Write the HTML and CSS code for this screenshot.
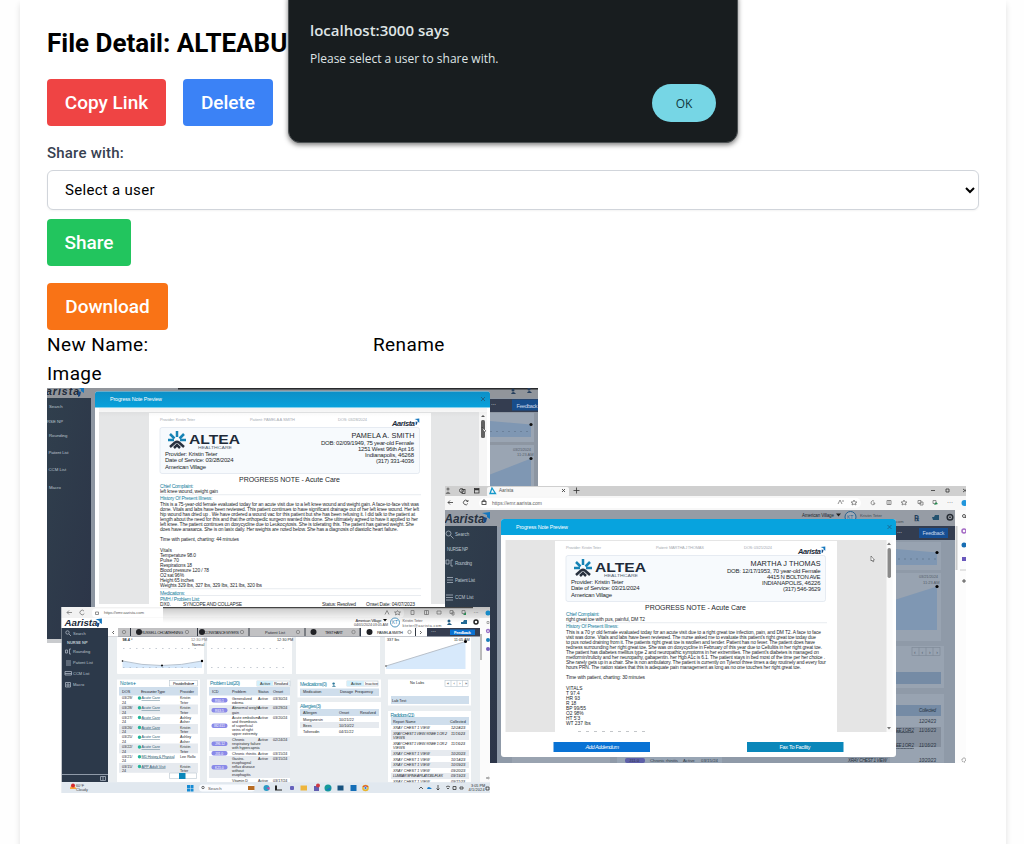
FILE: index.html
```
<!DOCTYPE html>
<html lang="en">
<head>
<meta charset="utf-8">
<title>File Detail</title>
<link rel="stylesheet" href="styles.css">
</head>
<body>
<main class="card">
  <h1 class="title">File Detail: ALTEABU</h1>
  <div class="actions">
    <button class="btn red">Copy Link</button>
    <button class="btn blue">Delete</button>
  </div>
  <label class="label" for="user">Share with:</label>
  <select class="select" id="user"><option>Select a user</option></select>
  <button class="btn green">Share</button>
  <button class="btn orange">Download</button>
  <div class="rename"><span class="name">New Name:</span><span>Rename</span></div>
  <div class="caption">Image</div>
  <svg class="preview" viewBox="47 388 932 412" width="932" height="412">
    <defs>
      <linearGradient id="side" x1="0" y1="0" x2="1" y2="1"><stop offset="0" stop-color="#303f4d"/><stop offset="1" stop-color="#2c3548"/></linearGradient>
      <linearGradient id="head" x1="0" y1="0" x2="0" y2="1"><stop offset="0" stop-color="#0d8fc6"/><stop offset="1" stop-color="#07a1dc"/></linearGradient>
      <linearGradient id="shade" x1="0" y1="0" x2="0" y2="1"><stop offset="0" stop-color="#000" stop-opacity=".22"/><stop offset="1" stop-color="#000" stop-opacity="0"/></linearGradient>
      <g id="altea">
        <g stroke-width="2.5" fill="none"><path stroke="#1683b5" d="M9 0v6M2 3l4.500 4.500M16 3l-4.500 4.500M0 9h6M12 9h6"/><path stroke="#28313f" d="M2 16l5-4.500q2-1.500 4 0l5 4.500M6 17l3-3 3 3"/></g>
        <text class="s b dark" x="21" y="12.500" font-size="13" textLength="51" lengthAdjust="spacingAndGlyphs">ALTEA</text>
        <text class="s" x="30" y="17.500" font-size="3.600" fill="#526273" textLength="34" lengthAdjust="spacingAndGlyphs">HEALTHCARE</text>
      </g>
      <g id="flag"><path fill="#1577be" d="M0 1L8 0V7L5 5V3z"/><path fill="#174883" d="M2 5l3 1-1 4-2 1z"/></g>
      <g id="people"><circle cx="2" cy="2" r="1.500"/><path d="M0 6q2-4 5 0z"/></g>
      <clipPath id="c1"><rect x="47" y="388" width="491" height="255"/></clipPath>
      <clipPath id="c2"><rect x="445" y="486" width="521" height="277"/></clipPath>
      <clipPath id="c3"><rect x="61.500" y="607" width="428.500" height="186"/></clipPath>
    </defs>

    <!-- first note window -->
    <g clip-path="url(#c1)">
      <rect x="47" y="388" width="491" height="219" fill="#8d96a2"/>
      <rect x="47" y="388" width="491" height="10" fill="#91959b"/>
      <rect x="178" y="388" width="360" height="1.500" fill="#282a2d"/>
      <rect x="47" y="398" width="44" height="241" fill="url(#side)"/>
      <rect x="47" y="639" width="15" height="4" fill="#c9cbce"/>
      <text class="s b i dark" x="46" y="394.500" font-size="10.500" textLength="33">arista</text>
      <use href="#flag" x="76" y="386"/>
      <g class="s side" font-size="4.300">
        <text x="49" y="408">Search</text><text x="47" y="422.500">RSE NP</text><text x="49" y="436.500">Rounding</text><text x="48.500" y="454" textLength="20">Patient List</text><text x="48.500" y="471">CCM List</text><text x="49" y="488.500">Macro</text>
      </g>
      <rect x="490" y="399" width="48" height="13" fill="#343d50"/>
      <text class="s white" x="491" y="406" font-size="5">···</text>
      <rect x="512" y="399.500" width="26" height="11" fill="#174d8b"/>
      <text class="s" x="516.500" y="407.500" font-size="5.500" fill="#c8d6e8" textLength="21">Feedback</text>
      <use href="#people" x="511" y="388" fill="#263f5d"/><use href="#people" x="527" y="387" fill="#263f5d"/>
      <rect x="490" y="413" width="44" height="29" fill="#9aa5b3"/>
      <path d="M490 421L531 424.500V437H490z" fill="#7f97b3"/>
      <path d="M490 431.500h40" stroke="#64778f" stroke-width=".7" stroke-dasharray="2 4"/>
      <circle cx="531" cy="424.500" r="1.600" fill="#111"/>
      <rect x="490" y="445" width="44" height="41" fill="#9aa5b3"/>
      <path d="M490 474.500L531 458.500V486H490z" fill="#7f97b3"/>
      <circle cx="531" cy="458.500" r="1.600" fill="#111"/>
      <text class="s" x="513" y="450.500" font-size="4" fill="#59616c" textLength="18">03/21/2024</text><text class="s" x="517" y="455.500" font-size="4" fill="#59616c">11:23 AM</text>
      <path d="M95 607V394q0-2.500 2.500-2.500H487.500q2.500 0 2.500 2.500V607z" fill="#fff"/>
      <path d="M95 407.500V394q0-2.500 2.500-2.500H487.500q2.500 0 2.500 2.500V407.500z" fill="url(#head)"/>
      <text class="s white" x="110" y="401" font-size="5.400" textLength="52">Progress Note Preview</text>
      <path d="M481 397l4 4m0-4l-4 4" stroke="#284f69" stroke-width=".7"/>
      <rect x="99" y="412" width="388" height="192" fill="#e5e6e7"/>
      <rect x="479" y="412" width="8" height="192" fill="#f6f6f6"/>
      <rect x="149" y="413" width="282" height="191" fill="#fff"/>
      <rect x="99" y="408" width="388" height="9" fill="url(#shade)" opacity=".25"/>
      <rect x="481" y="420" width="4" height="18" rx="1.500" fill="#626262"/><path d="M481 417l2-2 2 2z" fill="#555"/>
      <path d="M482 427l4 4-2 1z" fill="#fff" stroke="#222" stroke-width=".5"/>
      <g class="s" fill="#a8acb3" font-size="4"><text x="160" y="421" textLength="35">Provider: Kristin Teter</text><text x="250" y="421" textLength="45">Patient: PAMELA A SMITH</text><text x="338" y="421" textLength="29">DOS: 03/28/2024</text></g>
      <text class="s b i dark" x="392" y="425.500" font-size="7.500" textLength="23">Aarista</text><use href="#flag" transform="translate(414.500 418.500) scale(.6)"/>
      <rect x="160" y="427.500" width="259.500" height="46" rx="2" fill="#f7fafd" stroke="#dce4ed" stroke-width=".7"/>
      <use href="#altea" x="168" y="431"/>
      <g class="s ink" font-size="6"><text x="165" y="456" textLength="52.500">Provider: Kristin Teter</text><text x="165" y="462" textLength="68.500">Date of Service: 03/28/2024</text><text x="165" y="468.500" textLength="41">American Village</text></g>
      <g class="s ink" font-size="6"><text x="351.500" y="438" font-size="7.300" textLength="63">PAMELA A. SMITH</text><text x="321" y="444.500" textLength="93">DOB: 02/09/1949, 75 year-old Female</text><text x="358" y="450.700" textLength="56">1251 West 96th Apt 16</text><text x="365" y="457" textLength="49">Indianapolis,  46268</text><text x="376" y="463.200" textLength="38">(317) 331-4036</text></g>
      <text class="s ink" x="239" y="481.500" font-size="7" textLength="101">PROGRESS NOTE - Acute Care</text>
      <path d="M160 494.700H421M160 588.700H421M160 595.500H421" stroke="#dfe4ea" stroke-width=".7"/>
      <g class="s teal" font-size="5"><text x="160" y="488" textLength="33.500">Chief Complaint:</text><text x="160" y="500.300" textLength="52.500">History Of Present Illness:</text><text x="160" y="594.500" textLength="25">Medications:</text><text x="160" y="601" textLength="40">PMH / Problem List:</text></g>
      <g class="s ink" font-size="4.900">
        <text x="160" y="493" textLength="58">left knee wound, weight gain</text>
        <text x="160" y="505.500" textLength="259">This is a 75-year-old female evaluated today for an acute visit due to a left knee wound and weight gain. A face-to-face visit was</text>
        <text x="160" y="510.600" textLength="259">done. Vitals and labs have been reviewed. This patient continues to have significant drainage out of her left knee wound. Her left</text>
        <text x="160" y="515.700" textLength="255">hip wound has dried up . We have ordered a wound vac for this patient but she has been refusing it. I did talk to the patient at</text>
        <text x="160" y="520.800" textLength="258">length about the need for this and that the orthopedic surgeon wanted this done. She ultimately agreed to have it applied to her</text>
        <text x="160" y="525.900" textLength="254">left knee. The patient continues on doxycycline due to Leukocytosis. She is tolerating this. The patient has gained weight. She</text>
        <text x="160" y="531" textLength="238">does have anasarca. She is on lasix daily. Her weights are noted below. She has a diagnosis of diastolic heart failure.</text>
        <text x="160" y="541.200" textLength="79">Time with patient, charting: 44 minutes</text>
        <text x="160" y="551.500">Vitals</text><text x="160" y="556.600" textLength="36">Temperature 98.0</text><text x="160" y="561.700">Pulse 70</text><text x="160" y="566.800" textLength="32">Respirations 18</text><text x="160" y="571.900" textLength="49">Blood pressure 120 / 78</text><text x="160" y="577" textLength="24">O2 sat 96%</text><text x="160" y="582.100" textLength="34">Height 65 inches</text><text x="160" y="587.200" textLength="102">Weights 329 lbs, 327 lbs, 329 lbs, 321 lbs, 320 lbs</text>
        <text x="160" y="606">DX0.</text><text x="183" y="606" textLength="59">SYNCOPE AND COLLAPSE</text><text x="322" y="606" textLength="34">Status: Resolved</text><text x="366" y="606" textLength="49">Onset Date: 04/07/2023</text>
      </g>
    </g>

    <!-- second note window -->
    <g clip-path="url(#c2)">
      <rect x="445" y="486" width="521" height="277" fill="#8f9aa8"/>
      <rect x="445" y="486" width="521" height="10" fill="#cfcfcf"/>
      <rect x="487" y="487" width="82" height="10" rx="2" fill="#f8f8f8"/>
      <rect x="445" y="496" width="521" height="14" fill="#f7f7f7"/>
      <rect x="479" y="498" width="382" height="10" rx="5" fill="#fff"/>
      <g fill="#777"><circle cx="448" cy="489" r="1.500"/><path d="M445.500 494q2.500-5 5 0z"/></g>
      <g class="ic"><circle cx="461.500" cy="490.500" r="2"/><rect x="462" y="489.500" width="3" height="4"/><rect x="474.500" y="488.500" width="4.500" height="4.500"/><path d="M474.500 489.500h4.500" stroke-width="1.500"/><path d="M562 489l3 3m0-3l-3 3M573.500 490.500h6M576.500 487.500v6M931 490.500h4M946 489h3v3h-3zM963 489l4 3m0-3l-4 3M453 502.500h-5m2-2l-2 2 2 2M467.500 501a2.300 2.300 0 1 0 .3 2.500m.2-3.500v1.500h-1.500"/><rect x="482" y="501.500" width="4" height="3"/><path d="M483 501v-1h2v1"/></g>
      <path d="M492 488l3.500 5.500H490z" fill="none" stroke="#1598ca" stroke-width="1.300"/>
      <text class="s" x="499" y="492.300" font-size="4.600" fill="#555">Aarista</text>
      <text class="s" x="492" y="504.800" font-size="5" fill="#666" textLength="50">https://emr.aarista.com</text>
      <g class="ic grey"><path d="M838 504l2-4 2 4m1-4v2M854 500l1 2h2l-1.500 1 .5 2-2-1-2 1 .5-2-1.500-1h2zM874 501a2 2 0 1 0 1 2h-2M887 500.500h4v4h-4zM889 500v5M904 500l1 2h2l-1.500 1 .5 2-2-1-2 1 .5-2-1.500-1h2zM918 500.500h3v3h-3zM920 502h3v3h-3zM933 500.500h3v3h-3z"/></g><path d="M934 505l2-3 2 2z" fill="#258b50"/><text class="s ink" x="947" y="503.500" font-size="6">···</text>
      <rect x="445" y="510" width="510" height="17" fill="#969ca5"/>
      <text class="s b i" x="444.500" y="523" font-size="12" fill="#27313f" textLength="40" lengthAdjust="spacingAndGlyphs">Aarista</text><use href="#flag" x="482" y="512"/>
      <rect x="445" y="526" width="52" height="237" fill="url(#side)"/>
      <g class="s side" font-size="4.500"><text x="455" y="536">Search</text><text x="447" y="550.500" textLength="21">NURSE NP</text><text x="455" y="564.500" textLength="17">Rounding</text><text x="455" y="582" textLength="20">Patient List</text><text x="455" y="599">CCM List</text></g>
      <g class="sic"><circle cx="448.500" cy="533.500" r="2.500"/><path d="M450.500 535.500l3 3M446 560h3v4h-3zM453 560h-2v6h2M447 577.500h6M447 580h6M447 582.500h6M446 595h7M446 597.500h7M446 600h7"/></g>
      <text class="s" x="802" y="516.500" font-size="4.500" fill="#22272f" textLength="32">American Village</text><path d="M836 513.500h5l-2.500 3z" fill="#222"/>
      <circle cx="850.500" cy="517" r="5.500" fill="#a1a9b3" stroke="#27618f"/><text class="s" x="847" y="519" font-size="5" fill="#27618f">KT</text>
      <text class="s" x="860" y="516.500" font-size="4.300" fill="#454c56" textLength="22">Kristin Teter</text><text class="s" x="893" y="523" font-size="4" fill="#454c56">s.com</text>
      <text class="s b" x="914" y="521" font-size="8" fill="#203e5c">℞</text><path d="M932 517h2l1-2h4v5h-6z" fill="#24526f"/><circle cx="950" cy="517.300" r="2.800" fill="none" stroke="#272d35" stroke-width="1.500"/><circle cx="950" cy="517.300" r=".8"/>
      <rect x="896" y="526" width="59" height="14" fill="#333d50"/><text class="s white" x="897" y="534" font-size="5">···</text>
      <rect x="919" y="528" width="29" height="10" fill="#164f94"/><text class="s" x="922.500" y="535.300" font-size="5.400" fill="#c8d6e8" textLength="22">Feedback</text>
      <g fill="#98a3b1"><rect x="896" y="542" width="45" height="28"/><rect x="896" y="573" width="45" height="68"/><rect x="890" y="646" width="54" height="42"/><rect x="890" y="694" width="54" height="69"/></g>
      <path d="M896 549L937 552.500V565H896z" fill="#7f97b3"/><path d="M898 559h38" stroke="#60738b" stroke-width=".7" stroke-dasharray="2 4"/><circle cx="937" cy="552.500" r="1.600"/>
      <text class="s" x="919" y="578" font-size="4" fill="#555e69" textLength="19">03/21/2024</text><text class="s" x="923" y="583.500" font-size="4" fill="#555e69">11:23 AM</text>
      <path d="M896 599.500L937 586.500V630H896z" fill="#7f97b3"/><circle cx="937" cy="586.500" r="1.600"/>
      <rect x="896" y="672" width="45" height="12" fill="#758ba5"/><rect x="896" y="705" width="45" height="11" fill="#758ba5"/><rect x="896" y="727" width="45" height="20" fill="#858f9d"/>
      <g fill="none" stroke="#7c8795" stroke-width=".6"><rect x="912" y="647.500" width="28" height="8"/><path d="M919 647.500v8M926 647.500v8M933 647.500v8"/></g>
      <text class="s" x="914" y="654" font-size="5" fill="#4c5968" textLength="24">‹ ‹ › ›</text>
      <g class="s i" font-size="4.500" fill="#27323f"><text x="919" y="712" textLength="17">Collected</text><text x="919" y="722.500" textLength="17">12/24/23</text><text x="896" y="731.500" textLength="18" text-decoration="underline">EE 1 OR 2</text><text x="919" y="731.500" textLength="17">11/16/23</text><text x="896" y="747" textLength="18" text-decoration="underline">EE 1 OR 2</text><text x="919" y="747" textLength="17">11/16/23</text><text x="848" y="762" textLength="39">XRAY CHEST 1 VIEW</text><text x="919" y="762" textLength="17">10/20/23</text></g>
      <rect x="512" y="756" width="98" height="7" fill="#99a3b0"/><rect x="617" y="756" width="105" height="7" fill="#98a5b4"/>
      <rect x="625" y="758" width="20" height="5" rx="2" fill="#5d5fa8"/><g class="s" font-size="4.300" fill="#303946"><text x="629" y="762">J11.0</text><text x="650" y="762" textLength="28">Chronic rhinitis</text><text x="683" y="762">Active</text><text x="701" y="762" textLength="17">03/15/24</text></g>
      <path d="M501 526V522q0-3 3-3H893q3 0 3 3V754q0 3-3 3H504q-3 0-3-3z" fill="#fff"/>
      <path d="M501 535V522q0-3 3-3H893q3 0 3 3V535z" fill="#07a3de"/>
      <text class="s white" x="516" y="529" font-size="5.400" textLength="52">Progress Note Preview</text><path d="M887.500 525l4 4m0-4l-4 4" stroke="#1d587b" stroke-width=".7"/>
      <rect x="505.500" y="540" width="382" height="192" fill="#e5e5e5"/><rect x="886.500" y="540" width="6" height="192" fill="#fafafa"/>
      <rect x="555" y="541" width="282" height="191" fill="#fff"/>
      <path d="M887 545l2-2.500 2 2.500zM887 727h4l-2 2.500z" fill="#777"/><rect x="887.500" y="548" width="3.500" height="30" rx="1.700" fill="#898989"/>
      <path d="M871 556v5l1-1 1 2 .7-.4-.7-1.600h1.500z" fill="#fff" stroke="#333" stroke-width=".5"/>
      <g class="s" fill="#a8acb3" font-size="4"><text x="566" y="549" textLength="35">Provider: Kristin Teter</text><text x="656" y="549" textLength="48">Patient: MARTHA J THOMAS</text><text x="744" y="549" textLength="28">DOS: 03/21/2024</text></g>
      <text class="s b i dark" x="798" y="553.500" font-size="7.500" textLength="23">Aarista</text><use href="#flag" transform="translate(820.500 546.500) scale(.6)"/>
      <rect x="566" y="555.500" width="259.500" height="46" rx="2" fill="#f7fafd" stroke="#dce4ed" stroke-width=".7"/>
      <use href="#altea" x="574" y="559"/>
      <g class="s ink" font-size="6"><text x="571" y="584" textLength="52.500">Provider: Kristin Teter</text><text x="571" y="590.200" textLength="68.500">Date of Service: 03/21/2024</text><text x="571" y="596.500" textLength="41">American Village</text></g>
      <g class="s ink" font-size="6"><text x="750.500" y="566" font-size="7.300" textLength="70">MARTHA J THOMAS</text><text x="727" y="572.500" textLength="93.500">DOB: 12/17/1953, 70 year-old Female</text><text x="767" y="578.700" textLength="53.500">4415 N BOLTON AVE</text><text x="762" y="585" textLength="58.500">INDIANAPOLIS,  46226</text><text x="783" y="591.200" textLength="37.500">(317) 546-3629</text></g>
      <text class="s ink" x="645" y="609.500" font-size="7" textLength="101">PROGRESS NOTE - Acute Care</text>
      <path d="M566 622.700H827" stroke="#dfe4ea" stroke-width=".7"/>
      <g class="s teal" font-size="5"><text x="566" y="615.800" textLength="33.500">Chief Complaint:</text><text x="566" y="628.300" textLength="52.500">History Of Present Illness:</text></g>
      <g class="s ink" font-size="4.900">
        <text x="566" y="621" textLength="79">right great toe with pus, painful, DM T2</text>
        <text x="566" y="633.500" textLength="255">This is a 70 yr old female evaluated today for an acute visit due to a right great toe infection, pain, and DM T2.   A face to face</text>
        <text x="566" y="638.600" textLength="250">visit was done.  Vitals and labs have been reviewed. The nurse asked me to evaluate this patient's right great toe today due</text>
        <text x="566" y="643.700" textLength="249">to pus noted draining from it. The patients right great toe is swollen and tender. Patient has no fever. The patient does have</text>
        <text x="566" y="648.800" textLength="256">redness surrounding her right great toe. She was on doxycycline in February of this year due to Cellulitis in her right great toe.</text>
        <text x="566" y="654" textLength="253">The patient has diabetes mellitus type 2 and neuropathic symptoms in her extremities. The patient's diabetes is managed on</text>
        <text x="566" y="659.100" textLength="259">metformin/trulicity and her neuropathy, gabapentin. her Hgb A1c is 6.1. The patient stays in bed most of the time per her choice .</text>
        <text x="566" y="664.200" textLength="260">She rarely gets up in a chair. She is non ambulatory. The patient is currently on Tylenol three times a day routinely and every four</text>
        <text x="566" y="669.300" textLength="235">hours PRN. The nation states that this is adequate pain management as long as no one touches her right great toe.</text>
        <text x="566" y="679.300" textLength="79">Time with patient, charting: 30 minutes</text>
        <text x="566" y="689.500">VITALS</text><text x="566" y="694.600">T 97.4</text><text x="566" y="699.700">HR 93</text><text x="566" y="704.800">R 18</text><text x="566" y="709.900">BP 99/55</text><text x="566" y="715">O2 98%</text><text x="566" y="720.100">HT 5'3</text><text x="566" y="725.200">WT 237 lbs</text>
      </g>
      <path d="M578 731.500h67" stroke="#b4b7bb" stroke-width=".8" stroke-dasharray="3 5"/>
      <rect x="553.500" y="742" width="96.500" height="10" fill="#0872d4"/><rect x="747" y="742" width="96.500" height="10" fill="#0a87ba"/>
      <text class="s white i" x="585.500" y="749" font-size="5.500" textLength="33.500">Add Addendum</text><text class="s white" x="779.500" y="749" font-size="5.500" textLength="31">Fax To Facility</text>
      <rect x="955" y="510" width="11" height="253" fill="#fcfcfc"/><rect x="955.500" y="526" width="2" height="44" fill="#ccc"/>
      <g class="ic"><circle cx="964" cy="516" r="1.500"/><path d="M965 517l1 1M962 581h4M964 579v4"/></g><circle cx="964.500" cy="503" r="3" fill="#2196dc"/><circle cx="964" cy="531" r="2" fill="none" stroke="#a46ac5" stroke-width="1.500"/><circle cx="964" cy="545" r="2.500" fill="#176db3"/><rect x="962" y="557" width="4" height="4" fill="#6957bc"/><path d="M960 570h6" stroke="#ccc"/><circle cx="964" cy="760" r="2" fill="none" stroke="#555" stroke-dasharray="1"/>
    </g>

    <!-- patient dashboard window -->
    <g clip-path="url(#c3)">
      <rect x="61" y="607" width="430" height="186" fill="#e9edf0"/>
      <rect x="61" y="607" width="430" height="11" fill="#f2f2f2"/><rect x="92" y="608.500" width="312" height="9" rx="4" fill="#fff"/>
      <rect x="163" y="607" width="327" height="14" fill="url(#shade)"/><rect x="163" y="607" width="310" height="1.200" fill="#444"/>
      <g class="ic grey"><path d="M72 612.500h-5m2-2l-2 2 2 2M84 611a2.300 2.300 0 1 0 .3 2.500M95.500 612h3v2.500h-3zM385 614.500l2-4 2 4M397.500 610.500l1 1.500h2l-1.500 1 .5 2-2-1-2 1 .5-2-1.500-1h2zM411 610.500h3v4h-3zM424.500 610.500h4v4h-4zM426.500 610v5M437 611h4v3h-4zM450 610.500h3v3h-3zM452 612h2v3h-2zM462 610.500h3v3h-3z"/></g><path d="M463 615l3-3v3z" fill="#298a53"/><text class="s ink" x="473.500" y="614" font-size="5">···</text>
      <text class="s" x="104" y="614.200" font-size="4.300" fill="#666" textLength="40">https://emr.aarista.com</text>
      <rect x="61" y="618" width="419" height="10" fill="#fff"/><rect x="163" y="618" width="317" height="5" fill="url(#shade)" opacity=".3"/>
      <text class="s b i dark" x="64.500" y="625.500" font-size="9.500" textLength="33" lengthAdjust="spacingAndGlyphs">Aarista</text><use href="#flag" transform="translate(95.500 618.500) scale(.8)"/>
      <text class="s ink" x="355.500" y="622" font-size="4" textLength="26">American Village</text><path d="M383 619h4l-2 2.500z"/><text class="s" x="354" y="626" font-size="3.700" fill="#444" textLength="34">04/01/2024 03:05 AM</text>
      <circle cx="395" cy="622.500" r="4.500" fill="#fff" stroke="#277bad" stroke-width=".8"/><text class="s" x="392" y="624.200" font-size="4.500" fill="#277bad">KT</text>
      <g class="s" font-size="3.800" fill="#555"><text x="402.500" y="622">Kristin Teter</text><text x="402.500" y="626.500" textLength="39">kteter@aarista.com</text></g>
      <use href="#people" x="447" y="619" fill="#205c83"/><path d="M461 622h2l1-2h3v4h-6z" fill="#216994"/><circle cx="476" cy="622" r="2" fill="none" stroke="#222" stroke-width="1.500"/>
      <rect x="61.500" y="628" width="46.500" height="154" fill="#2c394a"/>
      <g class="s side" font-size="4"><text x="73" y="634.500">Search</text><text x="67" y="643.500" font-weight="bold">NURSE NP</text><text x="73" y="652.500">Rounding</text><text x="73" y="663.500">Patient List</text><text x="73" y="674.500">CCM List</text><text x="73" y="686">Macro</text></g>
      <g class="sic"><circle cx="67.500" cy="632.500" r="1.700"/><path d="M69 634l2 2M65.500 650h2v3h-2zM71 649h-1.500v5h1.500M66 661h5M66 663h5M66 665h5M65 671.500h6.500v3.500h-6.500zM65 673.500h6.500M65.500 682.500h5v4.500h-5zM67 684h2v2h-2zM62 774.500h46M100.500 776.500h5v4h-5zM103 776.500v4"/></g>
      <rect x="108" y="628" width="372" height="8.500" fill="#353d50"/><rect x="108" y="628" width="252" height="8.500" fill="#c1c1c3"/><rect x="361" y="628" width="66" height="8.500" fill="#fff"/><rect x="108" y="628" width="10" height="8.500" fill="#fff"/>
      <path d="M130.500 628v8M197.500 628v8M249 628v8M305 628v8M360 628v8M415.500 628v8" stroke="#323842"/>
      <path d="M114 631l-1.500 1.500 1.500 1.500M420 631l1.500 1.500-1.500 1.500" stroke="#222" stroke-width=".7" fill="none"/>
      <g fill="#202125"><circle cx="139" cy="632" r="3"/><circle cx="202" cy="632" r="3"/><circle cx="313.500" cy="632" r="3"/><circle cx="369.500" cy="632" r="3"/></g>
      <g class="s ink" font-size="4"><text x="141" y="633.500" textLength="42">RUSSELL CHOATEHNING</text><text x="204" y="633.500" textLength="35">CONSTANCE MYERS</text><text x="265" y="633.500" textLength="20">Patient List</text><text x="325" y="633.500" textLength="18">TEST HART</text><text x="377" y="633.500" textLength="26">PAMELA SMITH</text></g>
      <g fill="none" stroke="#777" stroke-width=".7"><circle cx="124" cy="632" r="1.700"/><circle cx="187" cy="632" r="1.700"/><circle cx="242" cy="632" r="1.700"/><circle cx="298" cy="632" r="1.700"/><circle cx="353.500" cy="632" r="1.700"/><circle cx="409.500" cy="632" r="1.700"/></g>
      <text class="s white" x="431" y="633" font-size="5">···</text><rect x="450" y="629.500" width="25" height="5.500" fill="#0a72d2"/><text class="s white b" x="454" y="634" font-size="4.300" textLength="17">Feedback</text>
      <g fill="#fff"><rect x="117" y="637" width="87" height="37" rx="1"/><rect x="207" y="637" width="85" height="37"/><rect x="296" y="637" width="84" height="37"/><rect x="385" y="637" width="86" height="37"/></g>
      <path d="M122.500 661Q161 670 202 661V668H122.500z" fill="#d7e9fb"/><path d="M122.500 661Q161 670 202 661" fill="none" stroke="#b6c2cf"/><g><circle cx="122.500" cy="661" r=".8"/><circle cx="162" cy="665.500" r="1"/><circle cx="202" cy="661" r="1.200"/></g>
      <path d="M386 666L465.500 641.500V669H386z" fill="#d7e9fb"/><path d="M386 666L465.500 641.500" stroke="#b8c0ca"/><circle cx="465.500" cy="641.500" r="1.500"/><circle cx="386" cy="666" r="1" fill="#888"/>
      <path d="M123 648.500h78M123 667.500h78M211 648.500h78M211 667.500h78" stroke="#adb6c1" stroke-width=".7" stroke-dasharray="1.500 5"/>
      <g class="s ink" font-size="3.800"><text x="122.500" y="640.500" class="b">98.4 °</text><text x="191" y="640.500" fill="#777">12:30 PM</text><text x="192" y="645.500">Normal</text><text x="387" y="640.500">337 lbs</text><text x="454" y="640.500">11:05 AM</text><text x="277" y="640.500">12:30 PM</text></g>
      <g fill="#fff"><rect x="117" y="679.500" width="83" height="102.500"/><rect x="207" y="679.500" width="83" height="102.500"/><rect x="297.500" y="679.500" width="83.500" height="18"/><rect x="297.500" y="702" width="83.500" height="34"/><rect x="388" y="679.500" width="83" height="26"/><rect x="388" y="711" width="83" height="71"/></g>
      <g class="s teal" font-size="5"><text x="120" y="685">Notes</text><text class="b" x="133" y="685">+</text><text x="210" y="685" textLength="30">Problem List(20)</text><text x="300" y="685.500" textLength="27">Medications(0)</text><text x="300" y="708" textLength="21">Allergies(3)</text><text x="390.500" y="716.500" textLength="24">Radiology(21)</text></g>
      <use href="#people" transform="translate(332 682) scale(.8)" fill="#2b7799"/>
      <g fill="#cfdeec"><rect x="119" y="687" width="79" height="8.500"/><rect x="209" y="687" width="81" height="8.500"/><rect x="300" y="688.500" width="79" height="7.500"/><rect x="300" y="709" width="79" height="7"/><rect x="391" y="696" width="78" height="8"/><rect x="391" y="717" width="78" height="8"/></g>
      <g fill="#e6eaef"><rect x="119" y="704.500" width="79" height="9.800"/><rect x="119" y="724" width="79" height="9.800"/><rect x="119" y="743.500" width="79" height="9.800"/><rect x="119" y="763" width="79" height="9.800"/><rect x="209" y="705" width="81" height="10"/><rect x="209" y="737" width="81" height="14"/><rect x="209" y="756" width="81" height="22"/><rect x="300" y="722" width="79" height="6"/><rect x="391" y="730" width="78" height="10"/><rect x="391" y="750" width="78" height="6"/><rect x="391" y="762" width="78" height="6"/><rect x="391" y="773" width="78" height="6"/></g>
      <g fill="none" stroke="#b7c5cf" stroke-width=".6"><rect x="169.500" y="680.500" width="28" height="5.500"/><rect x="257" y="681" width="33" height="5"/><rect x="347" y="681" width="31" height="5"/><rect x="445" y="680.500" width="23" height="6"/><path d="M451 680.500v6M457 680.500v6M462.500 680.500v6M169.500 773h27v5.500h-27z"/></g><rect x="257" y="681" width="16" height="5" fill="#d2effb"/><rect x="347" y="681" width="17" height="5" fill="#d2effb"/><rect x="179" y="773" width="6.500" height="6" fill="#0a87ba"/>
      <g class="s ink" font-size="3.800">
        <text x="173" y="684.500" textLength="21">Provider/Index▾</text><text x="260" y="684.800">Active</text><text x="274" y="684.800" textLength="14">Resolved</text><text x="351" y="684.800">Active</text><text x="365" y="684.800">Inactive</text><text x="410" y="683.500">No Labs</text><text x="447" y="685" textLength="20">« ‹ › »</text>
        <text x="122" y="692.500">DOS</text><text x="141" y="692.500" textLength="24">Encounter Type</text><text x="180" y="692.500">Provider</text><text x="212" y="692.500">ICD</text><text x="232" y="692.500">Problem</text><text x="258" y="692.500">Status</text><text x="273" y="692.500">Onset</text>
        <text x="303" y="693">Medication</text><text x="340" y="693">Dosage</text><text x="355" y="693">Frequency</text><text x="303" y="714">Allergen</text><text x="339" y="714">Onset</text><text x="360" y="714">Resolved</text><text x="303" y="720.500">Morganesin</text><text x="339" y="720.500">10/21/22</text><text x="303" y="726.500">Bees</text><text x="339" y="726.500">10/10/22</text><text x="303" y="732.500">Tolterodin</text><text x="339" y="732.500">04/11/22</text><text x="392" y="701.500">Lab Test</text><text x="393" y="722.500">Report Name</text><text x="450" y="722.500">Collected</text>
      </g>
      <g class="s ink" font-size="3.700">
        <text x="122" y="699">03/29/</text><text x="122" y="703.500">24</text><text x="122" y="709">03/28/</text><text x="122" y="713.500">24</text><text x="122" y="718.500">03/27/</text><text x="122" y="723">24</text><text x="122" y="728.500">03/26/</text><text x="122" y="733">24</text><text x="122" y="738">03/25/</text><text x="122" y="742.500">24</text><text x="122" y="748">03/22/</text><text x="122" y="752.500">24</text><text x="122" y="757.500">03/21/</text><text x="122" y="762">24</text><text x="122" y="767.500">03/15/</text><text x="122" y="772">24</text>
        <text x="180" y="699">Kristin</text><text x="180" y="703.500">Teter</text><text x="180" y="709">Kristin</text><text x="180" y="713.500">Teter</text><text x="180" y="718.500">Ashley</text><text x="180" y="723">Asher</text><text x="180" y="728.500">Kristin</text><text x="180" y="733">Teter</text><text x="180" y="738">Ashley</text><text x="180" y="742.500">Asher</text><text x="180" y="748">Kristin</text><text x="180" y="752.500">Teter</text><text x="180" y="757.500">Lee Rollo</text><text x="180" y="767.500">Kristin</text><text x="180" y="772">Teter</text>
      </g>
      <g class="s link" font-size="3.700"><text x="141.500" y="699">Acute Care</text><text x="141.500" y="709">Acute Care</text><text x="141.500" y="718.500">Acute Care</text><text x="141.500" y="728.500">Acute Care</text><text x="141.500" y="738">Acute Care</text><text x="141.500" y="748">Acute Care</text><text x="141.500" y="757.500" textLength="33">MD History &amp; Physical</text><text x="141.500" y="767.500" textLength="24">APP Adult Visit</text></g>
      <path d="M139.500 696v72" stroke="#26b69b" stroke-width="3.500" stroke-linecap="round" stroke-dasharray="0 9.800" transform="translate(0 2)"/>
      <g fill="#8989e8"><rect x="211.500" y="698" width="16" height="4.500" rx="2"/><rect x="211.500" y="708" width="16" height="4.500" rx="2"/><rect x="211.500" y="723.500" width="16" height="4.500" rx="2"/><rect x="211.500" y="741.500" width="16" height="4.500" rx="2"/><rect x="211.500" y="751" width="16" height="4.500" rx="2"/><rect x="211.500" y="765" width="16" height="4.500" rx="2"/></g>
      <g class="s white" font-size="3.300"><text x="215" y="701.500">R60.1</text><text x="215" y="711.500">R63.5</text><text x="214" y="727">I82.611</text><text x="215" y="745">J96.12</text><text x="215" y="754.500">J31.0</text><text x="215" y="768.500">K21.0</text></g>
      <g class="s ink" font-size="3.700">
        <text x="232" y="699.500">Generalized</text><text x="232" y="703.500">edema</text><text x="232" y="709">Abnormal weight</text><text x="232" y="713.500">gain</text><text x="232" y="719">Acute embolism</text><text x="232" y="723">and thrombosis</text><text x="232" y="727">of superficial</text><text x="232" y="731">veins of right</text><text x="232" y="735">upper extremity</text><text x="232" y="741">Chronic</text><text x="232" y="745">respiratory failure</text><text x="232" y="749">with hypercapnia</text><text x="232" y="754.500">Chronic rhinitis</text><text x="232" y="760">Gastro-</text><text x="232" y="764">esophageal</text><text x="232" y="768">reflux disease</text><text x="232" y="772">without</text><text x="232" y="776">esophagitis</text><text x="232" y="781.500">Vitamin D</text>
        <text x="258" y="699.500">Active</text><text x="258" y="709">Active</text><text x="258" y="719">Active</text><text x="258" y="741">Active</text><text x="258" y="754.500">Active</text><text x="258" y="760">Active</text><text x="258" y="781.500">Active</text>
        <text x="273" y="699.500">03/30/24</text><text x="273" y="709">03/29/24</text><text x="273" y="719">03/20/24</text><text x="273" y="741">02/24/24</text><text x="273" y="754.500">03/15/24</text><text x="273" y="760">03/15/24</text><text x="273" y="781.500">03/17/24</text>
      </g>
      <g class="s i ink" font-size="3.700"><text x="393" y="729">XRAY CHEST 1 VIEW</text><text x="393" y="734.500" textLength="54">XRAY CHEST 1 VIEW / KNEE 1 OR 2</text><text x="393" y="738.500">VIEWS</text><text x="393" y="744.500" textLength="54">XRAY CHEST 1 VIEW / KNEE 1 OR 2</text><text x="393" y="748.500">VIEWS</text><text x="393" y="754.500">XRAY CHEST 1 VIEW</text><text x="393" y="760.500">XRAY CHEST 1 VIEW</text><text x="393" y="766">XRAY CHEST 1 VIEW</text><text x="393" y="771.500">XRAY CHEST 1 VIEW</text><text x="393" y="777" textLength="50">LUMBAR SPINE AP/LAT/OBL/FLEX</text><text x="393" y="782.500">XRAY CHEST 1 VIEW</text>
      <text x="451" y="729">12/24/23</text><text x="451" y="734.500">11/16/23</text><text x="451" y="744.500">11/16/23</text><text x="451" y="754.500">10/20/23</text><text x="451" y="760.500">10/14/23</text><text x="451" y="766">10/09/23</text><text x="451" y="771.500">09/20/23</text><text x="451" y="777">09/19/23</text><text x="451" y="782.500">09/11/23</text></g>
      <rect x="480" y="618" width="10" height="165" fill="#fbfbfb"/><rect x="480" y="634" width="2" height="26" fill="#bbb"/>
      <circle cx="488" cy="613" r="2.500" fill="#198bc7"/><circle cx="488" cy="631" r="1.500" fill="none" stroke="#9770c5" stroke-width="1.300"/><circle cx="488" cy="640" r="2" fill="#167bb9"/><circle cx="488" cy="649" r="2" fill="#715bb8"/><path d="M487 621.500h2v2h-2zM486 778l3-1v2z" fill="none" stroke="#777" stroke-width=".6"/>
      <rect x="61" y="782.300" width="430" height="11" fill="#e1e8ef"/>
      <path d="M70 789q0-4 4-3l3 3z" fill="#f9a33a"/><circle cx="73" cy="785.500" r="2" fill="#d52a2e"/><g class="s" font-size="3.800" fill="#444"><text x="76" y="787">60°F</text><text x="76" y="791">Cloudy</text></g>
      <path d="M187 785h3v3h-3zM190.500 785h3v3h-3zM187 788.500h3v3h-3zM190.500 788.500h3v3h-3z" fill="#168bd4"/>
      <rect x="199" y="784.500" width="56" height="7" rx="3.500" fill="#fafcff"/><circle cx="203" cy="787.500" r="1.200" fill="none" stroke="#333" stroke-width=".7"/><text class="s" x="208" y="789.500" font-size="4.300" fill="#555">Search</text>
      <rect x="248" y="786" width="6.500" height="4" fill="#b76b22"/><circle cx="266.500" cy="788" r="3" fill="#299bc5"/><path d="M266.500 788l3-1v3z" fill="#d9439c"/><path d="M275 785.500h2v4h5v1h-7z" fill="#252525"/><rect x="290" y="786" width="4" height="4" rx="1" fill="#6561bb"/><rect x="300.500" y="785.500" width="6.500" height="5" fill="#eeb53c"/><rect x="314" y="786" width="5" height="5" fill="#615eb0"/><circle cx="318" cy="785.500" r="2" fill="#cf3942"/><circle cx="328" cy="788" r="3.500" fill="#159a9a"/><path d="M326 790q4 1 5-3z" fill="#1575c8"/><rect x="337.500" y="785.500" width="6" height="5" fill="#17527f"/><rect x="350.500" y="785" width="6" height="6" fill="#146eb7"/><circle cx="365.500" cy="788" r="3.300" fill="#e8b52e"/><path d="M362.500 787a3.500 3.500 0 0 1 6 0z" fill="#db4232"/><circle cx="365.500" cy="788" r="1.400" fill="#257be0" stroke="#fff" stroke-width=".5"/>
      <g class="ic"><path d="M419 789l2-2 2 2M438 785v5m-1.500-1.500l1.500 1.500 1.500-1.500M446 787q2-2 4 0M447 788.500h2M453 786.500h3v3h-3zM460 787h3v2h-3zM486 787h3v3h-3z"/></g><path d="M427 789q1-4 5 0z" fill="#177dcc"/><g class="s ink" font-size="3.800"><text x="471" y="787">3:05 PM</text><text x="468.500" y="791" textLength="16">4/1/2024</text></g>
    </g>
  </svg>
</main>
<div class="dialog" role="alertdialog">
  <div class="dialog-title">localhost:3000 says</div>
  <div class="dialog-text">Please select a user to share with.</div>
  <button class="ok">OK</button>
</div>
</body>
</html>
```
FILE: styles.css
```
* { box-sizing: border-box; }
body { margin: 0; height: 844px; overflow: hidden; background: #fefefe; color: #000; font-family: Roboto, sans-serif; }
.card { display: flex; flex-direction: column; align-items: flex-start; width: 986px; height: 866px; margin: 0 18px 0 20px; padding: 25px 27px; background: #fff; box-shadow: 0 4px 6px rgba(0,0,0,.12); }
.title { margin: 0 0 18px; font-size: 26px; line-height: 36px; font-weight: 700; letter-spacing: 0; white-space: nowrap; }
.actions { display: flex; gap: 17px; }
.btn { height: 47px; padding: 0 17px; border: 0; border-radius: 4px; color: #fff; font: 500 19px/47px Roboto, sans-serif; white-space: nowrap; flex: none; }
.red { width: 119px; background: #ef4444; }
.blue { width: 90px; background: #3b82f6; }
.green { width: 84px; margin-bottom: 17px; background: #22c55e; }
.orange { width: 121px; background: #f97316; }
.label { margin: 17px 0 6px; color: #374151; font-size: 15px; line-height: 21px; font-weight: 500; letter-spacing: .2px; }
.select { width: 932px; height: 40px; margin-bottom: 9px; padding: 0 0 0 13px; border: 1px solid #d1d5db; border-radius: 6px; background: #fff; color: #000; font: 15px Roboto, sans-serif; letter-spacing: .3px; box-shadow: 0 1px 2px rgba(0,0,0,.05); flex: none; }
.rename { display: flex; font-size: 19px; line-height: 29px; letter-spacing: .4px; }
.name { width: 326px; }
.caption { font-size: 19px; line-height: 29px; letter-spacing: .4px; }
.preview { display: block; flex: none; }
.dialog { position: absolute; left: 288px; top: -12px; width: 450px; height: 155px; padding: 30px 21px 20px; display: flex; flex-direction: column; align-items: flex-start; border: 1px solid #4d5254; border-radius: 12px; background: #181d1f; box-shadow: 0 2px 5px rgba(0,0,0,.5); color: #dfe4e5; font-family: "Open Sans", "Noto Sans", sans-serif; }
.dialog-title { font-size: 15px; line-height: 22px; font-weight: 600; white-space: nowrap; }
.dialog-text { margin-top: 8px; font-size: 12px; line-height: 20px; white-space: nowrap; }
.ok { align-self: flex-end; width: 64px; height: 38px; margin-top: 15px; padding: 0; border: 0; border-radius: 19px; background: #76d6e5; color: #103840; font: 500 12px "Open Sans", sans-serif; }
.s { font-family: "Liberation Sans", Arial, sans-serif; }
.b { font-weight: 700; }
.i { font-style: italic; }
.ink { fill: #25282c; }
.dark { fill: #202a39; }
.white { fill: #fff; }
.teal { fill: #147c9c; }
.side { fill: #bcc5cf; }
.link { fill: #28566d; text-decoration: underline; }
.ic { fill: none; stroke: #333; stroke-width: .8; }
.grey { stroke: #777; }
.sic { fill: none; stroke: #a9b4c0; stroke-width: .8; }
```
